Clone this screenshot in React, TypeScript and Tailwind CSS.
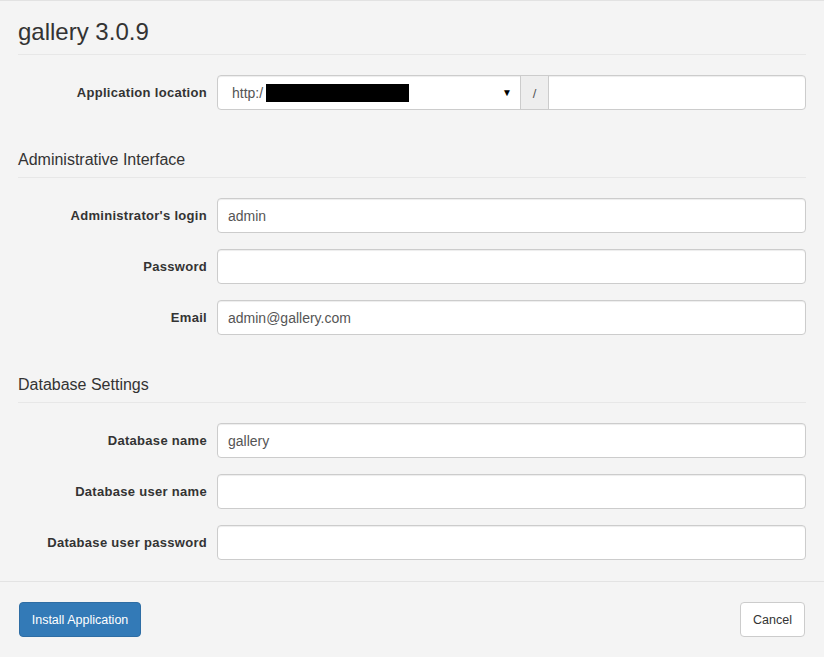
import React from "react";

const font = { fontFamily: '"Liberation Sans", Arial, sans-serif' };

function Row({ label, value }: { label: string; value?: string }) {
  return (
    <div className="flex items-center">
      <div className="w-[189px] pr-0 text-right text-[13px] font-bold tracking-[0.3px] text-[#333]">{label}</div>
      <div className="ml-[10px] flex h-[35px] flex-1 items-center rounded-[4px] border border-[#cccccc] bg-white px-[10px] pt-[2px] text-[14px] text-[#555] shadow-[inset_0_1px_1px_rgba(0,0,0,0.075)]">
        {value}
      </div>
    </div>
  );
}

function Section({ title }: { title: string }) {
  return (
    <div className="mt-[40px] border-b border-[#e7e7e7] pb-[8px] pt-[1px] text-[16px] leading-[18px] text-[#333]">
      {title}
    </div>
  );
}

export default function App() {
  return (
    <div className="min-h-screen border-t border-[#e2e2e2] bg-[#f4f4f4]" style={font}>
      <div className="px-[18px]">
        <h1 className="border-b border-[#e7e7e7] pb-[9px] pt-[18px] text-[24px] leading-[26px] text-[#333]">
          gallery 3.0.9
        </h1>
        <div className="mt-[20px] flex items-center">
          <div className="w-[189px] text-right text-[13px] font-bold tracking-[0.3px] text-[#333]">Application location</div>
          <div className="ml-[10px] flex h-[35px] flex-1 rounded-[4px] border border-[#cccccc] bg-white text-[14px] text-[#555] shadow-[inset_0_1px_1px_rgba(0,0,0,0.075)]">
            <div className="flex w-[302px] items-center pl-[14px] pr-[8px]">
              <span className="pt-[2px]">http:/</span>
              <span className="ml-[3px] inline-block h-[18px] w-[143px] bg-black" />
              <span className="ml-auto text-[10px] text-black">▼</span>
            </div>
            <div className="flex w-[29px] items-center justify-center border-x border-[#cccccc] bg-[#eeeeee] pt-[2px] text-[13px] text-[#555]">
              /
            </div>
            <div className="flex-1" />
          </div>
        </div>

        <Section title="Administrative Interface" />
        <div className="mt-[20px] flex flex-col gap-[16px]">
          <Row label="Administrator's login" value="admin" />
          <Row label="Password" />
          <Row label="Email" value="admin@gallery.com" />
        </div>

        <Section title="Database Settings" />
        <div className="mt-[20px] flex flex-col gap-[16px]">
          <Row label="Database name" value="gallery" />
          <Row label="Database user name" />
          <Row label="Database user password" />
        </div>
      </div>

      <div className="mt-[21px] flex items-center justify-between border-t border-[#e3e3e3] px-[19px] pb-[20px] pt-[20px]">
        <button className="flex h-[35px] w-[122px] items-center justify-center rounded-[4px] border border-[#2e6da4] bg-[#337ab7] pt-[1px] text-[12.5px] text-white">
          Install Application
        </button>
        <button className="flex h-[35px] w-[65px] items-center justify-center rounded-[4px] border border-[#cccccc] bg-white pt-[1px] text-[12.5px] text-[#333]">
          Cancel
        </button>
      </div>
    </div>
  );
}
